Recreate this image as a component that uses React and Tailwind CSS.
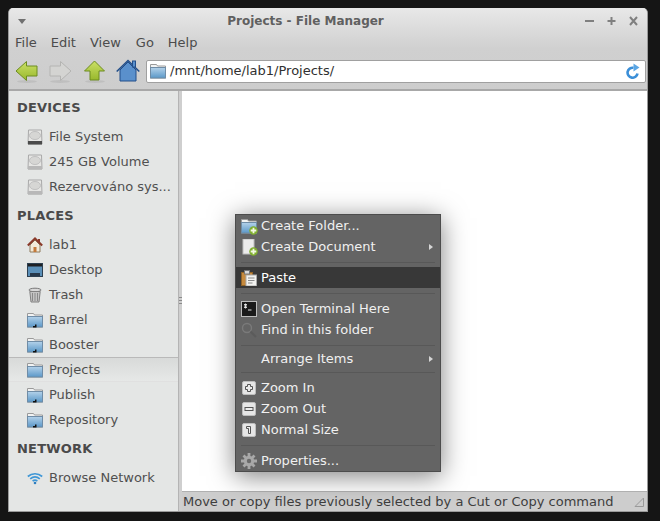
import React from 'react';

const font = { fontFamily: '"DejaVu Sans", sans-serif' };

const Drive = ({ dark }) => (
  <svg width="16" height="16" viewBox="0 0 16 16">
    <path d="M1.500 1h13l.5 14H1z" fill="#e6e6e4" stroke="#a9a9a9" />
    <ellipse cx="8" cy="6.500" rx="5.500" ry="4" fill="#d6d6d4" stroke="#c0c0c0" />
    <rect x="1" y="12" width="14" height="3.500" fill={dark ? '#4a4a4a' : '#b8b8b8'} />
  </svg>
);

const HomeSmall = () => (
  <svg width="16" height="16" viewBox="0 0 16 16">
    <path d="M3 8v7h10V8L8 3z" fill="#f2ead8" stroke="#8f7a5c" />
    <path d="M.8 8.500 8 1.500l7.200 7" fill="none" stroke="#8a3a2a" strokeWidth="2" />
    <rect x="11" y="2" width="2" height="3" fill="#8a3a2a" />
    <rect x="6.500" y="10" width="3" height="5" fill="#c4793a" />
  </svg>
);

const DesktopIcon = () => (
  <svg width="16" height="16" viewBox="0 0 16 16">
    <rect x=".5" y="1.500" width="15" height="13" fill="#5a8fb8" stroke="#2d3f50" />
    <rect x="1" y="2" width="14" height="2.500" fill="#1e2024" />
    <rect x="3" y="11" width="10" height="3" fill="#26384a" />
  </svg>
);

const TrashIcon = () => (
  <svg width="16" height="16" viewBox="0 0 16 16">
    <ellipse cx="8" cy="3" rx="6" ry="1.800" fill="#d9d9d9" stroke="#777" />
    <path d="M2.800 4.500 4 15h8l1.200-10.500z" fill="#c4c4c4" stroke="#808080" />
    <path d="M5.500 6v8M8 6v8M10.500 6v8" stroke="#8a8a8a" />
  </svg>
);

const FolderIcon = ({ link }) => (
  <svg width="16" height="16" viewBox="0 0 16 16">
    <defs>
      <linearGradient id="fold" x1="0" y1="0" x2="0" y2="1">
        <stop offset="0" stopColor="#b4d2ea" />
        <stop offset="1" stopColor="#5b98c8" />
      </linearGradient>
    </defs>
    <path d="M.5 1.500h6l1 1.500h8v12H.5z" fill="#f2f3f3" stroke="#9a9a9a" />
    <rect x=".5" y="4.500" width="15" height="10.500" fill="url(#fold)" stroke="#6f8ca6" />
    {link && <path d="M8 12.500h1.500v3H6v-1.500h2z" fill="#111" />}
  </svg>
);

const WifiIcon = () => (
  <svg width="16" height="16" viewBox="0 0 16 16" fill="none" stroke="#3f97d6">
    <path d="M.8 6.500C5 2.800 11 2.800 15.200 6.500" strokeWidth="1.700" />
    <path d="M3.200 8.800c2.900-2.300 6.700-2.300 9.600 0" strokeWidth="1.700" />
    <path d="M5.600 11c1.500-1 3.300-1 4.800 0" strokeWidth="1.700" />
    <circle cx="8" cy="13" r="1.300" fill="#2f7fc0" stroke="none" />
  </svg>
);

const Arrow = ({ d, green }) => (
  <svg width="24" height="24" viewBox="0 0 24 24">
    <defs>
      <linearGradient id="lime" x1="0" y1="0" x2="0" y2="1">
        <stop offset="0" stopColor="#cbe066" />
        <stop offset="1" stopColor="#98b82c" />
      </linearGradient>
    </defs>
    <ellipse cx="12" cy="22.500" rx="10" ry="1.500" fill="#000" opacity=".07" />
    <path d={d} fill={green ? 'url(#lime)' : '#d4d4d2'} stroke={green ? '#6d8c20' : '#b4b4b2'} strokeLinejoin="round" />
  </svg>
);

const HomeBig = () => (
  <svg width="24" height="24" viewBox="0 0 24 24">
    <path d="M4 11v11h16V11L12 3z" fill="#5a90cc" stroke="#234f8a" />
    <path d="M.7 12.500 12 1.500l11.300 11" fill="none" stroke="#234f8a" strokeWidth="1.600" />
    <rect x="16.500" y="2" width="3" height="6" fill="#5a90cc" stroke="#234f8a" />
  </svg>
);

const Refresh = () => (
  <svg width="14" height="16" viewBox="0 0 14 16" fill="none">
    <path d="M11.500 10.500A5 5 0 1 1 7.500 4.800" stroke="#3b8fd8" strokeWidth="2.600" />
    <path d="M7.500 0.500 13.500 4.500 7.500 8.500z" fill="#5ba6e4" />
  </svg>
);

const DEVICE_ROWS = [
  { icon: <Drive dark />, label: 'File System' },
  { icon: <Drive />, label: '245 GB Volume' },
  { icon: <Drive />, label: 'Rezervováno sys...' },
];
const PLACE_ROWS = [
  { icon: <HomeSmall />, label: 'lab1' },
  { icon: <DesktopIcon />, label: 'Desktop' },
  { icon: <TrashIcon />, label: 'Trash' },
  { icon: <FolderIcon link />, label: 'Barrel' },
  { icon: <FolderIcon link />, label: 'Booster' },
  { icon: <FolderIcon />, label: 'Projects', selected: true },
  { icon: <FolderIcon link />, label: 'Publish' },
  { icon: <FolderIcon link />, label: 'Repository' },
];

const SideHeader = ({ children }) => (
  <div className="h-[33px] flex items-center pl-2 text-[13px] font-bold text-[#4a4a4a] tracking-[0.2px]">{children}</div>
);

const SideRow = ({ icon, label, selected }) => (
  <div className={`h-[25px] flex items-center pl-[18px] gap-[6px] text-[13px] text-[#505050] ${selected ? 'bg-gradient-to-b from-[#d8dad9] to-[#e6e8e7] border-t border-[#b9b9b9] border-b border-b-[#e0e0e0]' : ''}`}>
    <span className="w-4 h-4 shrink-0">{icon}</span>
    <span className="whitespace-nowrap">{label}</span>
  </div>
);

const PlusBadge = () => (
  <svg width="9" height="9" viewBox="0 0 8 8" className="absolute -right-[1px] -bottom-[1px]">
    <circle cx="4" cy="4" r="3.800" fill="#7fae2e" />
    <path d="M4 1.500v5M1.500 4h5" stroke="#f3f8e4" strokeWidth="1.600" />
  </svg>
);

const NewFolder = () => (
  <span className="relative block w-4 h-4"><FolderIcon /><PlusBadge /></span>
);

const NewDoc = () => (
  <span className="relative block w-4 h-4">
    <svg width="16" height="16" viewBox="0 0 16 16"><rect x="2" y="0" width="11" height="15" fill="#ebebeb" stroke="#bdbdbd" /></svg>
    <PlusBadge />
  </span>
);

const PasteIcon = () => (
  <svg width="16" height="16" viewBox="0 0 16 16">
    <rect x=".5" y="2.500" width="11" height="13" fill="#c68a3e" stroke="#8f6227" />
    <rect x="5" y="5" width="10.500" height="11" fill="#f3f3f0" stroke="#aaa" />
    <path d="M7 8h6.500M7 10.500h6.500M7 13h4.500" stroke="#8a8a8a" />
    <rect x="3.500" y=".5" width="5" height="3.500" fill="#d9d9d9" stroke="#777" />
  </svg>
);

const TermIcon = () => (
  <svg width="16" height="16" viewBox="0 0 16 16">
    <rect x=".5" y=".5" width="15" height="15" fill="#1b1b1b" stroke="#bdbdbd" />
    <path d="M3 3.500h3M3 5h3M3 6.500h3M4.500 2.500v5" stroke="#e6e6e6" strokeWidth=".9" />
    <path d="M7 9h3.500" stroke="#e6e6e6" />
  </svg>
);

const FindIcon = () => (
  <svg width="16" height="16" viewBox="0 0 16 16" fill="none" opacity=".55">
    <circle cx="6" cy="6" r="4.500" stroke="#8d8d8d" strokeWidth="1.400" />
    <path d="M9.500 9.500 15 15" stroke="#555" strokeWidth="2.200" />
  </svg>
);

const ZoomBox = ({ children }) => (
  <svg width="16" height="16" viewBox="0 0 16 16">
    <rect x="1.500" y="1.500" width="13" height="13" rx="1.500" fill="#e6e6e6" stroke="#bdbdbd" />
    {children}
  </svg>
);

const ZoomIn = () => (
  <ZoomBox>
    <path d="M6.500 4.500h3v2h2v3h-2v2h-3v-2h-2v-3h2z" fill="#ececec" stroke="#555" />
  </ZoomBox>
);
const ZoomOut = () => (
  <ZoomBox>
    <rect x="4" y="6.500" width="8" height="3" fill="#ececec" stroke="#555" />
  </ZoomBox>
);
const ZoomNormal = () => (
  <ZoomBox>
    <path d="M5.500 4.500h4v7h-2V6.500h-2z" fill="#ececec" stroke="#555" />
  </ZoomBox>
);

const GearIcon = () => (
  <svg width="16" height="16" viewBox="0 0 16 16">
    <path d="M8 0v16M0 8h16M2.500 2.500l11 11M13.500 2.500l-11 11" stroke="#a8a8a8" strokeWidth="2.800" />
    <circle cx="8" cy="8" r="5.200" fill="#a8a8a8" />
    <circle cx="8" cy="8" r="2.200" fill="#6a6a6a" />
  </svg>
);

const MenuItem = ({ icon, label, active, sub, short }) => (
  <div className={`flex items-center pl-[5px] pr-[7px] gap-[4px] text-[13px] ${short ? 'h-[17px]' : 'h-[21px]'} ${active ? 'bg-[#383838] text-white' : 'text-[#f0f0f0]'}`}>
    <span className="w-4 h-4 shrink-0">{icon}</span>
    <span className="flex-1 whitespace-nowrap">{label}</span>
    {sub && <span className="w-0 h-0 border-y-[3.5px] border-y-transparent border-l-[4px] border-l-[#d6d6d6]" />}
  </div>
);

const MenuSep = () => (
  <div className="h-[10px] flex items-center px-[5px]">
    <div className="h-px w-full bg-[#585858]" />
  </div>
);

const ContextMenu = () => (
  <div className="absolute left-[235px] top-[214px] w-[206px] h-[258px] bg-[#646464] border border-[#4c4c4c] shadow-[0_4px_24px_rgba(0,0,0,0.5)]">
    <MenuItem icon={<NewFolder />} label="Create Folder..." />
    <MenuItem icon={<NewDoc />} label="Create Document" sub />
    <MenuSep />
    <MenuItem icon={<PasteIcon />} label="Paste" active />
    <MenuSep />
    <MenuItem icon={<TermIcon />} label="Open Terminal Here" />
    <MenuItem icon={<FindIcon />} label="Find in this folder" />
    <MenuSep />
    <MenuItem label="Arrange Items" sub short />
    <MenuSep />
    <MenuItem icon={<ZoomIn />} label="Zoom In" />
    <MenuItem icon={<ZoomOut />} label="Zoom Out" />
    <MenuItem icon={<ZoomNormal />} label="Normal Size" />
    <MenuSep />
    <MenuItem icon={<GearIcon />} label="Properties..." />
  </div>
);

export default function App() {
  return (
    <div className="relative w-[660px] h-[521px] bg-[#151515] pl-2 pr-3 pt-2 pb-[9px] overflow-hidden" style={font}>
      <div className="h-full flex flex-col rounded-t-[5px] overflow-hidden border-x border-b border-[#9a9a9a] bg-[#cdcdcd]">
        {/* title + menu + toolbar share one gradient */}
        <div className="h-[83px] shrink-0 flex flex-col bg-gradient-to-b from-[#e8e8e8] via-[#d0d0d0] to-[#cdcdcd] border-b-2 border-[#a8a8a8]">
          <div className="h-[24px] flex items-center text-[#606060] mt-[1px]">
            <span className="ml-[9px] w-0 h-0 border-x-[4px] border-x-transparent border-t-[5px] border-t-[#707070]" />
            <span className="flex-1 text-center font-bold text-[12px]">Projects - File Manager</span>
            <div className="flex items-center gap-[13px] mr-[9px]">
              <svg width="9" height="10" viewBox="0 0 9 10"><path d="M0 5h9" stroke="#808080" strokeWidth="2" /></svg>
              <svg width="9" height="10" viewBox="0 0 9 10"><path d="M.5 5h8M4.500 1v8" stroke="#808080" strokeWidth="2" /></svg>
              <svg width="9" height="10" viewBox="0 0 9 10"><path d="M1 1l7 8M8 1 1 9" stroke="#808080" strokeWidth="2" /></svg>
            </div>
          </div>
          <div className="h-[20px] flex items-center gap-[14px] pl-[6px] text-[13px] text-[#4c4c4c]">
            <span>File</span><span>Edit</span><span>View</span><span className="ml-px">Go</span><span>Help</span>
          </div>
          <div className="flex-1 flex items-center pl-[6px] pr-[1px]">
            <Arrow green d="M1 12 11.500 2.500V7H22v10H11.500v4.500z" />
            <span className="ml-[9px]"><Arrow d="M23 12 12.500 2.500V7H2v10h10.500v4.500z" /></span>
            <span className="ml-[11px]"><Arrow green d="M11.500 2 21.500 12H16v9H7v-9H1.500z" /></span>
            <span className="ml-[9px]"><HomeBig /></span>
            <div className="ml-[6px] flex-1 h-[23px] bg-white border border-[#a0a0a0] rounded-[2px] flex items-center pl-[3px] pr-[5px] text-[13px] text-[#303030]">
              <FolderIcon />
              <span className="ml-[4px] flex-1">/mnt/home/lab1/Projects/</span>
              <Refresh />
            </div>
          </div>
        </div>
        <div className="flex-1 flex min-h-0">
          <aside className="w-[169px] shrink-0 bg-[#e4e6e5]">
            <SideHeader>DEVICES</SideHeader>
            {DEVICE_ROWS.map((r) => <SideRow key={r.label} {...r} />)}
            <SideHeader>PLACES</SideHeader>
            {PLACE_ROWS.map((r) => <SideRow key={r.label} {...r} />)}
            <SideHeader>NETWORK</SideHeader>
            <SideRow icon={<WifiIcon />} label="Browse Network" />
          </aside>
          <div className="w-[4px] shrink-0 bg-[#cfcfcf] flex items-center justify-center border-l border-[#b4b4b4]">
            <div className="w-[3px] h-[7px] mb-[2px] bg-[repeating-linear-gradient(#8a8a8a_0_1px,transparent_1px_3px)]" />
          </div>
          <div className="flex-1 flex flex-col min-w-0">
            <div className="flex-1 bg-white" />
            <div className="h-[20px] shrink-0 flex items-center justify-between pl-[1px] pr-[3px] bg-[#cdcdcd] border-t border-[#b0b0b0] text-[13px] text-[#3e3e3e]">
              <span className="whitespace-nowrap">Move or copy files previously selected by a Cut or Copy command</span>
              <svg width="10" height="10" viewBox="0 0 10 10"><path d="M9.500 1v8.500H1z" fill="none" stroke="#9a9a9a" /></svg>
            </div>
          </div>
        </div>
      </div>
      <ContextMenu />
    </div>
  );
}
